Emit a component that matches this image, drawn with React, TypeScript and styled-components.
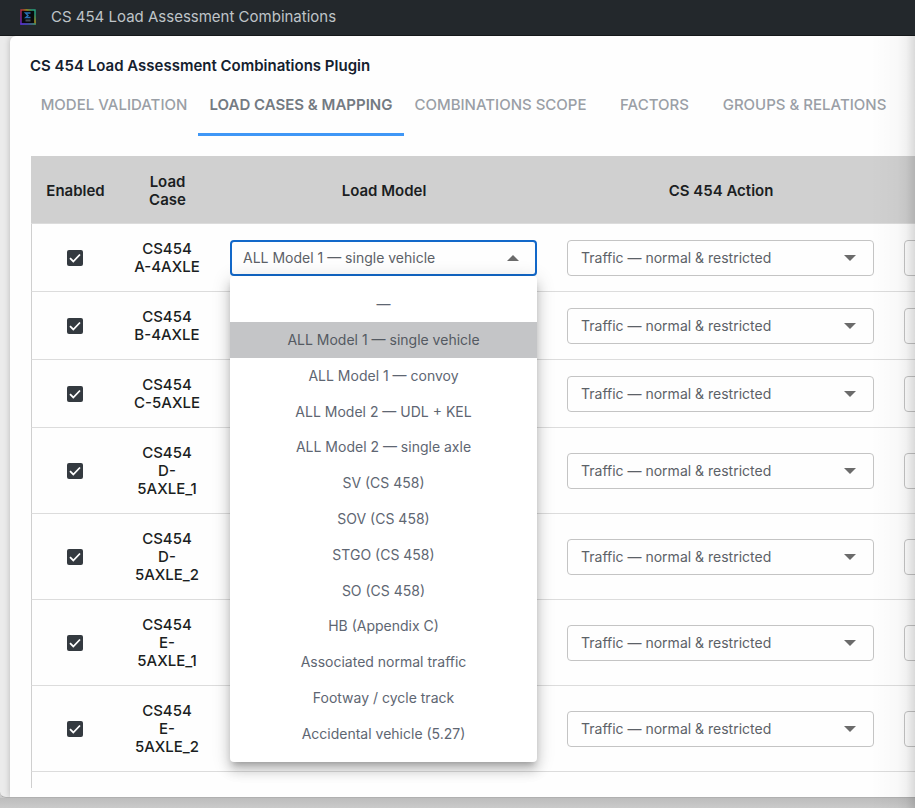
import React, { useState } from "react";
import styled, { createGlobalStyle } from "styled-components";

const GlobalStyle = createGlobalStyle`
  *, *::before, *::after { box-sizing: border-box; }
  body {
    margin: 0;
    background: #cacaca;
    font-family: Inter, "Liberation Sans", sans-serif;
    font-size: 15px;
    line-height: 18px;
    color: #1b1e22;
  }
`;

const Page = styled.div`
  position: relative;
  display: flex;
  flex-direction: column;
  height: 100vh;
  padding-bottom: 10px;
  overflow: hidden;
  background: linear-gradient(#bdbdbd, #cacaca) bottom / 100% 10px no-repeat #cacaca;
`;

const TitleBar = styled.header`
  display: flex;
  flex: none;
  align-items: center;
  gap: 15px;
  height: 36px;
  padding: 0 20px 2px;
  border-bottom: 1px solid #15181a;
  background: #23282c;
  color: #bfc4c8;
`;

const Workspace = styled.div`
  display: flex;
  flex: 1;
  min-height: 0;
  padding-left: 10px;
  overflow: hidden;
  border-bottom: 1px solid #b0b0b0;
  border-bottom-left-radius: 6px;
  background: #ebebeb;
`;

const Panel = styled.main`
  display: flex;
  flex: 1;
  flex-direction: column;
  min-width: 0;
  padding: 21px 0 9px 20px;
  border-top-left-radius: 6px;
  background: #fefefe;
  box-shadow: 0 0 6px rgba(0, 0, 0, 0.22);
`;

const Heading = styled.h1`
  margin: 0 0 10px;
  font-size: 15px;
  font-weight: 600;
  line-height: 18px;
  color: #14202e;
`;

const Tabs = styled.nav`
  display: grid;
  flex: none;
  grid-template-columns: 168px 206px 193px 115px 185px;
  height: 51px;
  margin-bottom: 20px;
`;

const Tab = styled.button<{ $active: boolean }>`
  padding: 0 0 8px;
  border: 0;
  border-bottom: 3px solid ${(p) => (p.$active ? "#3f97f6" : "transparent")};
  background: none;
  color: ${(p) => (p.$active ? "#737a82" : "#9a9fa6")};
  font: inherit;
  font-weight: ${(p) => (p.$active ? 600 : 500)};
  white-space: nowrap;
  cursor: pointer;
`;

const TableArea = styled.div`
  flex: 1;
  min-height: 0;
  margin-left: 1px;
  overflow: hidden;
`;

const Table = styled.table`
  width: 1195px;
  border-collapse: separate;
  border-spacing: 0;
  table-layout: fixed;
  text-align: center;
`;

const Column = styled.col<{ $width: number }>`
  width: ${(p) => p.$width}px;
`;

const HeadCell = styled.th`
  height: 68px;
  padding: 2px 14px 0 15px;
  border-bottom: 1px solid #dcdcdc;
  background: #d0d0d0;
  font-weight: 600;
`;

const Cell = styled.td`
  padding: 16px 15px 15px;
  border-bottom: 1px solid #dcdcdc;
  font-weight: 500;
  vertical-align: middle;

  &:first-child {
    padding-right: 16px;
    border-left: 1px solid #cfcfcf;
  }
`;

const ControlCell = styled(Cell)`
  padding-top: 0;
  padding-bottom: 0;
`;

const CheckLabel = styled.label`
  display: grid;
  place-items: center;
`;

const CheckInput = styled.input`
  grid-area: 1 / 1;
  width: 16px;
  height: 16px;
  margin: 0;
  border-radius: 2px;
  appearance: none;
  background: #343a40;

  &:not(:checked) {
    border: 1px solid #343a40;
    background: #fff;
  }

  &:not(:checked) + svg {
    display: none;
  }
`;

const CheckMark = styled.svg`
  grid-area: 1 / 1;
  width: 16px;
  height: 16px;
  pointer-events: none;
`;

const Field = styled.div`
  position: relative;
  display: grid;
  align-items: center;
`;

const Select = styled.select<{ $open?: boolean }>`
  grid-area: 1 / 1;
  width: 100%;
  height: 36px;
  padding: 0 40px 0 ${(p) => (p.$open ? 11 : 13)}px;
  border: ${(p) => (p.$open ? "2px solid #1268c9" : "1px solid #c4c4c4")};
  border-radius: 4px;
  outline: none;
  appearance: none;
  background: transparent;
  color: #5c6167;
  font: inherit;
  font-size: 14px;
  font-weight: 400;
`;

const Arrow = styled.svg<{ $up?: boolean }>`
  grid-area: 1 / 1;
  justify-self: end;
  width: 12px;
  height: 6px;
  margin-right: 18px;
  fill: #6b6b6b;
  transform: ${(p) => (p.$up ? "rotate(180deg)" : "none")};
  pointer-events: none;
`;

const Menu = styled.ul`
  position: absolute;
  z-index: 2;
  top: 100%;
  left: 0;
  display: flex;
  flex-direction: column;
  width: 100%;
  height: 486px;
  margin: 0;
  padding: 11px 0 10px;
  border-radius: 4px;
  background: #fff;
  box-shadow:
    0 5px 6px -3px rgba(0, 0, 0, 0.24),
    0 9px 12px 1px rgba(0, 0, 0, 0.14),
    0 3px 18px 2px rgba(0, 0, 0, 0.12);
  list-style: none;
`;

const MenuItem = styled.li<{ $selected: boolean }>`
  display: flex;
  flex: 1;
  align-items: center;
  justify-content: center;
  background: ${(p) => (p.$selected ? "#c4c5c7" : "transparent")};
  color: ${(p) => (p.$selected ? "#545a62" : "#5e6672")};
  font-size: 14px;
  font-weight: 400;
  cursor: pointer;
`;

const EdgeShade = styled.div`
  position: absolute;
  z-index: 3;
  top: 36px;
  right: 0;
  bottom: 0;
  width: 45px;
  background: linear-gradient(
    to right,
    transparent,
    rgba(0, 0, 0, 0.02) 60%,
    rgba(0, 0, 0, 0.05) 80%,
    rgba(0, 0, 0, 0.14)
  );
  pointer-events: none;
`;

const tabs = [
  "MODEL VALIDATION",
  "LOAD CASES & MAPPING",
  "COMBINATIONS SCOPE",
  "FACTORS",
  "GROUPS & RELATIONS",
];

const loadCases = [
  "CS454 A-4AXLE",
  "CS454 B-4AXLE",
  "CS454 C-5AXLE",
  "CS454 D-5AXLE_1",
  "CS454 D-5AXLE_2",
  "CS454 E-5AXLE_1",
  "CS454 E-5AXLE_2",
];

const loadModels = [
  "—",
  "ALL Model 1 — single vehicle",
  "ALL Model 1 — convoy",
  "ALL Model 2 — UDL + KEL",
  "ALL Model 2 — single axle",
  "SV (CS 458)",
  "SOV (CS 458)",
  "STGO (CS 458)",
  "SO (CS 458)",
  "HB (Appendix C)",
  "Associated normal traffic",
  "Footway / cycle track",
  "Accidental vehicle (5.27)",
];

function Logo() {
  return (
    <svg width="16" height="16" viewBox="0 0 16 16" aria-hidden="true">
      <defs>
        <linearGradient id="frame" x1="0" y1="1" x2="1" y2="0.3">
          <stop offset="0" stopColor="#5b2bd0" />
          <stop offset="0.3" stopColor="#a01f7c" />
          <stop offset="0.55" stopColor="#c4372c" />
          <stop offset="0.75" stopColor="#b7a321" />
          <stop offset="1" stopColor="#26a884" />
        </linearGradient>
        <linearGradient id="base" x1="0" y1="0" x2="1" y2="0">
          <stop offset="0" stopColor="#5a2dd0" />
          <stop offset="0.5" stopColor="#2359b8" />
          <stop offset="1" stopColor="#18a078" />
        </linearGradient>
      </defs>
      <rect x="1" y="1" width="14" height="14" fill="#07090c" stroke="url(#frame)" strokeWidth="1.4" />
      <rect x="0.3" y="14.3" width="15.4" height="1.4" fill="url(#base)" />
      <path d="M10.5 4H5.5L8 6.5L5.8 8.5H10.5" fill="none" stroke="#2871b5" strokeWidth="1.4" />
      <path d="M5.5 11.5H10.5" stroke="#454b52" strokeWidth="2" />
    </svg>
  );
}

function Dropdown({ label, value }: { label: string; value: string }) {
  return (
    <Field>
      <Select aria-label={label} defaultValue={value}>
        <option>{value}</option>
      </Select>
      <Arrow viewBox="0 0 12 6" aria-hidden="true">
        <path d="M0 0H12L6 6Z" />
      </Arrow>
    </Field>
  );
}

function LoadModelDropdown({ label }: { label: string }) {
  const [value, setValue] = useState(loadModels[1]);
  return (
    <Field>
      <Select $open aria-label={label} value={value} onChange={(e) => setValue(e.target.value)}>
        {loadModels.map((model) => (
          <option key={model}>{model}</option>
        ))}
      </Select>
      <Arrow $up viewBox="0 0 12 6" aria-hidden="true">
        <path d="M0 0H12L6 6Z" />
      </Arrow>
      <Menu role="listbox" aria-label={label}>
        {loadModels.map((model) => (
          <MenuItem
            key={model}
            role="option"
            aria-selected={model === value}
            $selected={model === value}
            onClick={() => setValue(model)}
          >
            {model}
          </MenuItem>
        ))}
      </Menu>
    </Field>
  );
}

export default function App() {
  const [active, setActive] = useState(tabs[1]);
  return (
    <>
      <GlobalStyle />
      <Page>
        <TitleBar>
          <Logo />
          <span>CS 454 Load Assessment Combinations</span>
        </TitleBar>
        <Workspace>
          <Panel>
            <Heading>CS 454 Load Assessment Combinations Plugin</Heading>
            <Tabs>
              {tabs.map((tab) => (
                <Tab key={tab} type="button" $active={tab === active} onClick={() => setActive(tab)}>
                  {tab}
                </Tab>
              ))}
            </Tabs>
            <TableArea>
              <Table>
                <colgroup>
                  <Column $width={88} />
                  <Column $width={96} />
                  <Column $width={337} />
                  <Column $width={337} />
                  <Column $width={337} />
                </colgroup>
                <thead>
                  <tr>
                    <HeadCell>Enabled</HeadCell>
                    <HeadCell>Load Case</HeadCell>
                    <HeadCell>Load Model</HeadCell>
                    <HeadCell>CS 454 Action</HeadCell>
                    <HeadCell />
                  </tr>
                </thead>
                <tbody>
                  {loadCases.map((name, i) => (
                    <tr key={name}>
                      <ControlCell>
                        <CheckLabel>
                          <CheckInput type="checkbox" defaultChecked aria-label={`Enable ${name}`} />
                          <CheckMark viewBox="0 0 16 16" aria-hidden="true">
                            <path d="M3 8.2L6.3 11.5L13 4.5" fill="none" stroke="#fff" strokeWidth="1.8" />
                          </CheckMark>
                        </CheckLabel>
                      </ControlCell>
                      <Cell>{name}</Cell>
                      <ControlCell>
                        {i === 0 ? (
                          <LoadModelDropdown label={`Load model for ${name}`} />
                        ) : (
                          <Dropdown label={`Load model for ${name}`} value={loadModels[1]} />
                        )}
                      </ControlCell>
                      <ControlCell>
                        <Dropdown label={`Action for ${name}`} value="Traffic — normal & restricted" />
                      </ControlCell>
                      <ControlCell>
                        <Dropdown label={`Option for ${name}`} value="" />
                      </ControlCell>
                    </tr>
                  ))}
                  <tr>
                    <Cell />
                    <Cell colSpan={4} />
                  </tr>
                </tbody>
              </Table>
            </TableArea>
          </Panel>
        </Workspace>
        <EdgeShade />
      </Page>
    </>
  );
}
